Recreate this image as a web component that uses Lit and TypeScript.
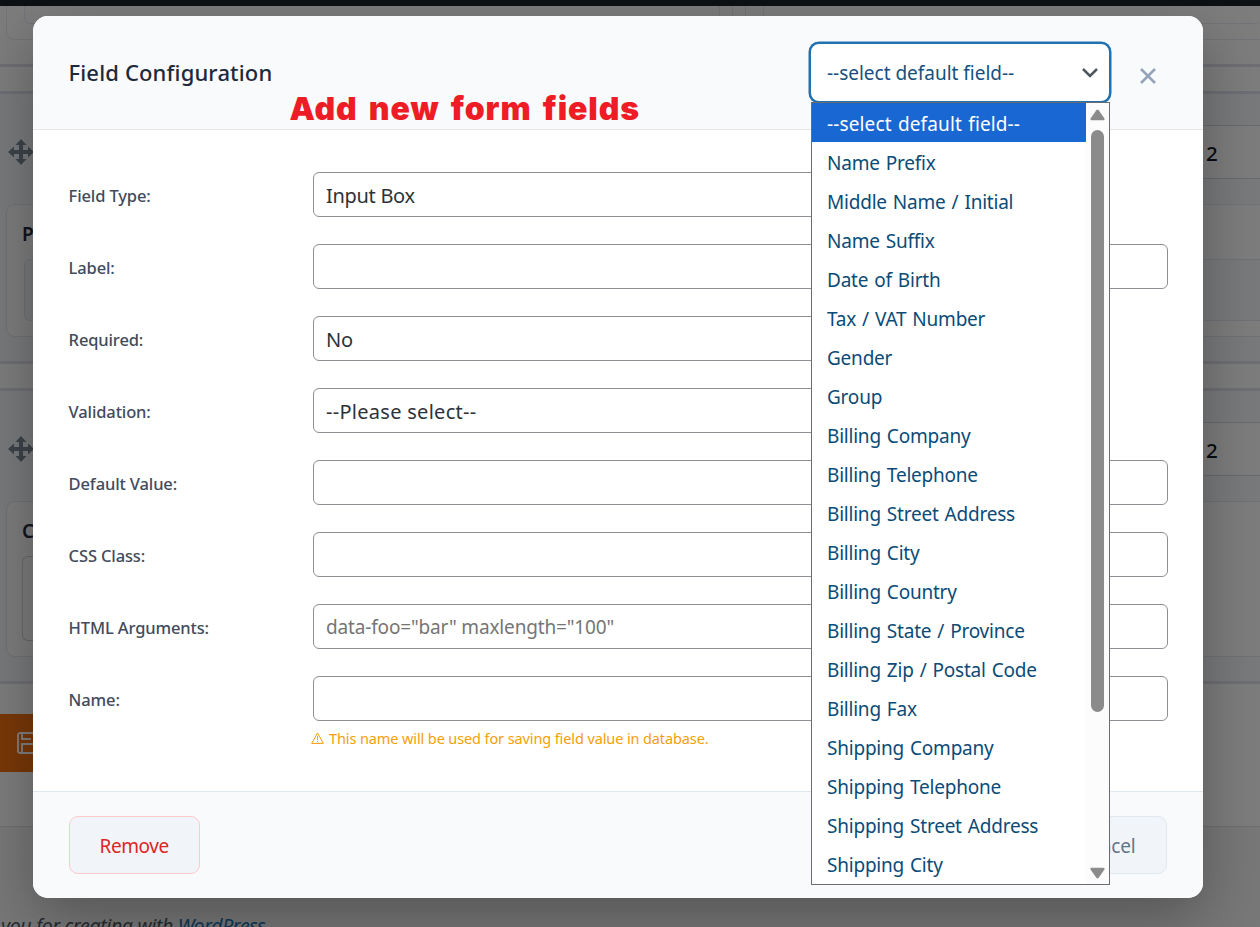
import { LitElement, html, css, svg } from "lit";
import { customElement } from "lit/decorators.js";
import { classMap } from "lit/directives/class-map.js";

const OPTIONS = [
  "--select default field--", "Name Prefix", "Middle Name / Initial", "Name Suffix",
  "Date of Birth", "Tax / VAT Number", "Gender", "Group", "Billing Company",
  "Billing Telephone", "Billing Street Address", "Billing City", "Billing Country",
  "Billing State / Province", "Billing Zip / Postal Code", "Billing Fax",
  "Shipping Company", "Shipping Telephone", "Shipping Street Address", "Shipping City",
];

type Field = { label: string; kind: "select" | "input"; value?: string; hint?: string; note?: string };

const FIELDS: Field[] = [
  { label: "Field Type:", kind: "select", value: "Input Box" },
  { label: "Label:", kind: "input" },
  { label: "Required:", kind: "select", value: "No" },
  { label: "Validation:", kind: "select", value: "--Please select--" },
  { label: "Default Value:", kind: "input" },
  { label: "CSS Class:", kind: "input" },
  { label: "HTML Arguments:", kind: "input", hint: 'data-foo="bar" maxlength="100"' },
  { label: "Name:", kind: "input", note: "This name will be used for saving field value in database." },
];

const moveIcon = html`<svg class="move" viewBox="0 0 26 26" width="26" height="26">${svg`
  <path fill="currentColor" d="M13 0l5.500 6h-3.500v5H20V7.500l6 5.500-6 5.500v-3.500h-5V20h3.500L13 26l-5.500-6h3.500v-5H6v3.500L0 13l6-5.500v3.500h5V6H7.500z"/>`}</svg>`;

@customElement("wp-backdrop")
class WpBackdrop extends LitElement {
  static styles = css`
    :host { display: flex; flex-direction: column; height: 927px; overflow: hidden; background: #f0f0f1; font-family: "Noto Sans", sans-serif; color: #1e293b; }
    * { box-sizing: border-box; }
    .bar { height: 6px; background: #1d2327; flex: none; }
    .head { height: 58px; flex: none; background: #fbfbfb; padding-left: 6px; display: flex; gap: 12px; }
    .slot { flex: none; width: 727px; height: 34px; border: 1px solid #e2e8f0; border-top: 0; border-radius: 0 0 8px 8px; padding-left: 17px; }
    .slot.wide { flex: 1; padding-right: 0; border-right: 0; border-radius: 0 0 0 8px; }
    .slot i { display: block; width: 696px; height: 18px; border: 1px solid #e2e8f0; border-top: 0; border-radius: 0 0 6px 6px; }
    .slot.wide i { width: 100%; border-right: 0; }
    .strip { height: 30px; flex: none; border: solid #dcdfe9; border-width: 3px 0; background: #fafafa; }
    .group { flex: none; height: 267px; background: #f1f5f9; display: flex; flex-direction: column; }
    .group.last { height: 290px; }
    .title { height: 110px; flex: none; display: flex; align-items: center; justify-content: space-between; padding: 6px 0 0 8px; }
    .move { color: #7b8794; }
    .num { margin-bottom: 1px; width: 60px; height: 54px; border: solid #d0d5de; border-width: 1px 0; background: #fbfbfb; font: 500 20.500px/54px "Noto Sans", sans-serif; padding-left: 6px; color: #111827; }
    .card { margin-left: 6px; height: 133px; border: 1px solid #dfe5ee; border-right: 0; border-radius: 9px 0 0 9px; background: #fbfbfb; padding: 15px 0 0 15px; font: 600 19px/28px "Noto Sans", sans-serif; }
    .card i { display: block; margin: 11px 0 0 2px; height: 62px; border: 1px solid #dde3ec; border-right: 0; border-radius: 6px 0 0 6px; background: #f1f5f9; }
    .last .card { height: 156px; }
    .last .card i { width: 1100px; height: 85px; margin: 11px 0 0 0; background: #fbfbfb; border-color: #ccd0d8; }
    .end { flex: none; height: 146px; background: #fafafa; border-top: 3px solid #dcdfe9; border-bottom: 1px solid #dcdcde; padding-top: 30px; }
    .save { width: 200px; height: 58px; background: #f3700f; padding: 18px 0 0 17px; color: #fff; }
    .foot { padding: 86px 0 0 0; font: italic 19.500px/26px "Noto Sans", sans-serif; color: #50575e; letter-spacing: -.36px; white-space: nowrap; margin-left: 1px; }
    .foot a { color: #2271b1; text-decoration: underline; }
  `;
  render() {
    return html`
      <div class="bar"></div>
      <div class="head"><div class="slot"><i></i></div><div class="slot wide"><i></i></div></div>
      <div class="strip"></div>
      <div class="group">
        <div class="title">${moveIcon}<div class="num">2</div></div>
        <div class="card">P<i></i></div>
      </div>
      <div class="strip"></div>
      <div class="group last">
        <div class="title">${moveIcon}<div class="num">2</div></div>
        <div class="card">C<i></i></div>
      </div>
      <div class="end"><div class="save">
        <svg width="22" height="22" viewBox="0 0 22 22" fill="none" stroke="currentColor" stroke-width="1.9"><path d="M3 1h13l5 5v13a2 2 0 0 1-2 2H3a2 2 0 0 1-2-2V3a2 2 0 0 1 2-2zM5 1v6h9M5 21v-9h12v9"/></svg>
      </div></div>
      <div class="foot">you for creating with <a>WordPress</a>.</div>`;
  }
}

@customElement("default-field-select")
class DefaultFieldSelect extends LitElement {
  static styles = css`
    :host { display: block; position: relative; width: 302px; height: 61px; font-family: "Noto Sans", sans-serif; }
    * { box-sizing: border-box; }
    .box { height: 61px; border: 2px solid #2271b1; box-shadow: 0 0 0 .500px #2271b1; border-radius: 10px; background: #fff; display: flex; align-items: center; justify-content: space-between; padding: 0 11px 0 16px; color: #165080; font-size: 19px; letter-spacing: -.02px; }
    .menu { position: absolute; left: 2px; top: 60px; width: 299px; height: 783px; border: 1px solid #6c6c70; background: #fff; display: flex; z-index: 2; }
    .list { width: 274px; overflow: hidden; }
    .opt { height: 39px; line-height: 42px; padding-left: 15px; font-size: 19px; letter-spacing: -.22px; word-spacing: 1.300px; color: #0a4b78; white-space: nowrap; }
    .opt.on { background: #1967d2; color: #fff; letter-spacing: .12px; }
    .scroll { width: 23px; background: #fcfcfc; display: flex; flex-direction: column; align-items: center; padding: 6px 0 5px; }
    .track { flex: 1; padding-top: 9px; }
    .thumb { width: 13px; height: 582px; border-radius: 7px; background: #8b8b8b; }
  `;
  render() {
    return html`
      <div class="box"><span>--select default field--</span>
        <svg width="16" height="10" viewBox="0 0 16 10" fill="none" stroke="#50575e" stroke-width="2.500"><path d="M1 1l7 7 7-7"/></svg></div>
      <div class="menu">
        <div class="list">${OPTIONS.map((o, i) => html`<div class=${classMap({ opt: true, on: i === 0 })}>${o}</div>`)}</div>
        <div class="scroll">
          <svg width="15" height="12" viewBox="0 0 15 12"><path fill="#8b8b8b" d="M6.300 1.200q1.200-1.400 2.400 0l5.600 8q.9 2-1 2H1.700q-1.900 0-1-2z"/></svg>
          <div class="track"><div class="thumb"></div></div>
          <svg width="15" height="12" viewBox="0 0 15 12"><path fill="#8b8b8b" d="M6.300 10.800q1.200 1.400 2.400 0l5.600-8q.9-2-1-2H1.700q-1.900 0-1 2z"/></svg>
        </div>
      </div>`;
  }
}

@customElement("app-root")
class AppRoot extends LitElement {
  static styles = css`
    :host { display: block; position: relative; width: 1260px; height: 927px; overflow: hidden; font-family: "Noto Sans", sans-serif; }
    * { box-sizing: border-box; }
    .overlay { position: absolute; inset: 0; background: rgba(0, 0, 0, .5); padding: 16px 57px 29px 33px; }
    .modal { height: 882px; border-radius: 15px; background: #fff; box-shadow: 0 20px 60px rgba(0, 0, 0, .3); display: flex; flex-direction: column; }
    .header { position: relative; height: 114px; flex: none; background: #f9fafc; border-bottom: 1px solid #e5e7eb; border-radius: 15px 15px 0 0; display: flex; align-items: flex-start; padding: 26px 47px 0 35.500px; }
    .header h2 { margin: 13px auto 0 0; font-weight: 500; font-size: 22px; line-height: 34px; color: #1e293b; letter-spacing: .15px; white-space: nowrap; }
    .callout { position: absolute; left: 256.500px; top: 72px; font: 900 32px/42px Inter, "Liberation Sans", sans-serif; color: #ee1c25; white-space: nowrap; letter-spacing: .9px; word-spacing: 4px; }
    .close { margin: 26px 0 0 29px; display: block; }
    .body { flex: 1; padding: 42px 35px 0; display: flex; flex-direction: column; gap: 27px; }
    .row { display: flex; height: 45px; flex: none; }
    .row label { width: 245px; flex: none; padding-left: .6px; font-weight: 500; font-size: 16.500px; line-height: 48px; color: #414b5c; white-space: nowrap; letter-spacing: -.13px; }
    .ctl { width: 855px; height: 45px; flex: none; border: 1px solid #8c8f94; border-radius: 6px; font-size: 20px; line-height: 45px; padding-left: 12px; color: #2c3338; background: #fff; letter-spacing: -.3px; }
    .ctl.sel { width: 560px; }
    .ctl.dashed { letter-spacing: .28px; }
    .ctl.hint { color: #757575; font-size: 19px; letter-spacing: -.16px; }
    .stack { display: flex; flex-direction: column; }
    .note { display: flex; align-items: center; gap: 5px; margin: 6px 0 0 -2px; font-size: 14.500px; line-height: 22px; color: #f59e0b; letter-spacing: -.11px; white-space: nowrap; }
    .footer { height: 107px; flex: none; border-top: 1px solid #e2e8f0; background: #f9fafc; border-radius: 0 0 15px 15px; padding: 24px 36px; display: flex; justify-content: space-between; }
    .btn { height: 58px; border: 1px solid #e2e8f0; border-radius: 9px; background: #f1f5f9; font-size: 19px; line-height: 58px; padding: 0 30.500px; color: #64748b; letter-spacing: -.2px; }
    .btn.danger { width: 131px; padding-left: 29.500px; border-color: #fecaca; color: #dc2626; letter-spacing: -.42px; }
  `;
  render() {
    return html`
      <wp-backdrop></wp-backdrop>
      <div class="overlay">
        <div class="modal">
          <div class="header">
            <h2>Field Configuration</h2>
            <default-field-select></default-field-select>
            <svg class="close" width="16" height="16" viewBox="0 0 16 16" fill="none" stroke="#94a3b8" stroke-width="2.500"><path d="M1 1l14 14M15 1L1 15"/></svg>
            <div class="callout">Add new form fields</div>
          </div>
          <div class="body">${FIELDS.map((f) => html`
            <div class="row"><label>${f.label}</label>
              <div class="stack">
                <div class=${classMap({ ctl: true, sel: f.kind === "select", hint: !!f.hint, dashed: !!f.value?.startsWith("--") })}>${f.value ?? f.hint ?? ""}</div>
                ${f.note ? html`<div class="note">
                  <svg width="13" height="12" viewBox="0 0 13 12" fill="none" stroke="currentColor" stroke-width="1"><path d="M6.500 .9L12.300 11.400H.7zM6.500 4v4M6.500 9v1.200"/></svg>
                  <span>${f.note}</span></div>` : ""}
              </div>
            </div>`)}</div>
          <div class="footer"><div class="btn danger">Remove</div><div class="btn">Cancel</div></div>
        </div>
      </div>`;
  }
}
